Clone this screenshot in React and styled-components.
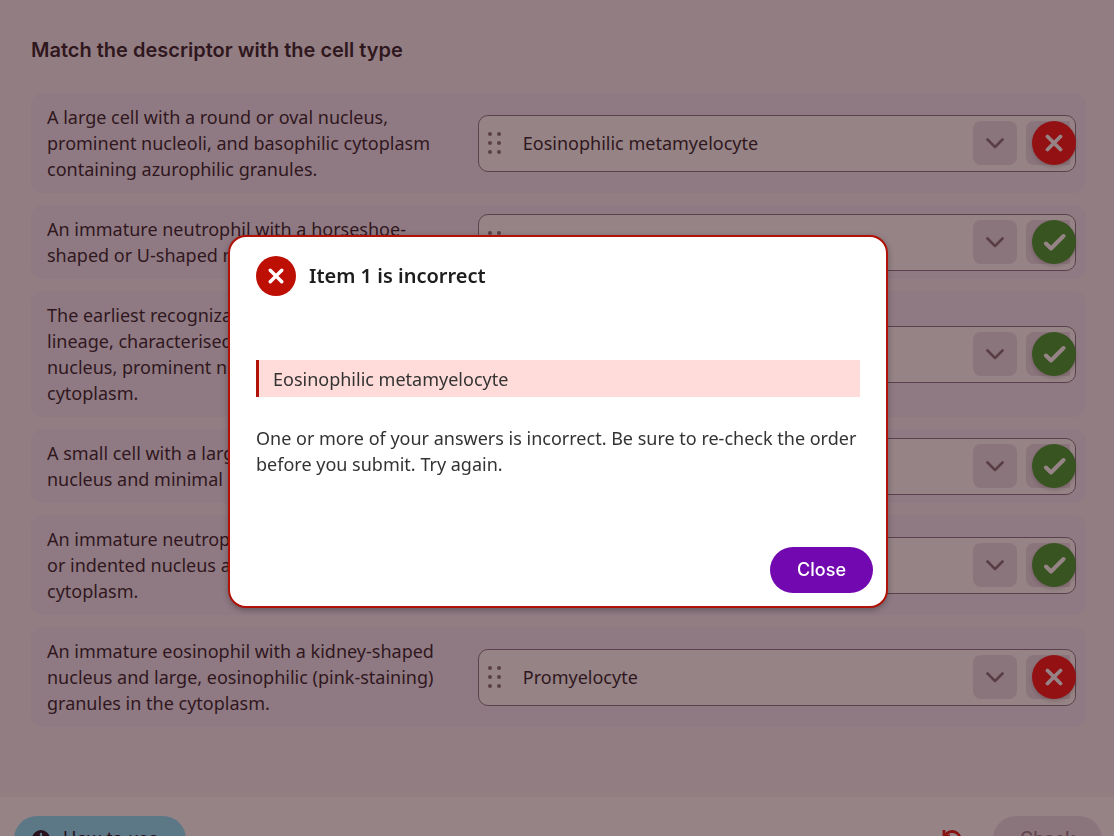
import React, { useState } from 'react';
import styled, { createGlobalStyle } from 'styled-components';

const GlobalStyle = createGlobalStyle`
  * {
    box-sizing: border-box;
  }

  body {
    margin: 0;
    background: #f9f2f8;
    color: #1c1018;
    font-family: 'Noto Sans', sans-serif;
    font-size: 18px;
    line-height: 26px;
  }

  button, select {
    font: inherit;
    color: inherit;
  }
`;

const Page = styled.div`
  height: 100vh;
  overflow: hidden;
  display: flex;
  flex-direction: column;
`;

const Activity = styled.main`
  flex: none;
  padding: 35px 28px 70px 31px;
`;

const Title = styled.h1`
  margin: 0 0 28px;
  font-family: Inter, sans-serif;
  font-size: 20px;
  font-weight: 600;
  line-height: 30px;
`;

const List = styled.ul`
  margin: 0;
  padding: 0;
  list-style: none;
  display: flex;
  flex-direction: column;
  gap: 12px;
`;

const Row = styled.li`
  display: grid;
  grid-template-columns: 2fr 3fr;
  gap: 32px;
  align-items: center;
  padding: 11px 10px 11px 16px;
  border-radius: 12px;
  background: #f2ebf8;
`;

const Descriptor = styled.label`
  display: block;
`;

const Field = styled.div`
  display: flex;
  align-items: center;
  height: 57px;
  margin: -4px 0;
  padding-left: 8px;
  border: 1px solid #7c6f80;
  border-radius: 10px;
  background: #fff;
`;

const Handle = styled.svg`
  flex: none;
  width: 15px;
  height: 22px;
  margin-right: 21px;
  fill: #7a6a70;
`;

const SelectBox = styled.div`
  flex: 1;
  display: grid;
  align-items: center;
  min-width: 0;

  > * {
    grid-area: 1 / 1;
  }
`;

const Select = styled.select`
  width: 100%;
  height: 44px;
  padding: 0;
  border: 0;
  background: transparent;
  appearance: none;
`;

const Chevron = styled.span`
  justify-self: end;
  display: grid;
  place-items: center;
  width: 44px;
  height: 44px;
  border-radius: 8px;
  background: #e9dfe8;
  pointer-events: none;
`;

const Slot = styled.div`
  display: flex;
  justify-content: flex-end;
  width: 50px;
  margin: 0 -1px 0 9px;
  border-radius: 8px;
  background: linear-gradient(to right, #e9dfe8 44px, transparent 44px);
`;

const Mark = styled.span`
  flex: none;
  display: grid;
  place-items: center;
  width: ${props => props.$size || 44}px;
  height: ${props => props.$size || 44}px;
  border-radius: 50%;
  background: ${props => props.$color};
  box-shadow: ${props => props.$flat ? 'none' : '0 2px 4px rgba(0, 0, 0, 0.2)'};
`;

const Footer = styled.footer`
  display: flex;
  align-items: flex-start;
  justify-content: space-between;
  flex: none;
  padding: 19px 12px 18px 14px;
  background: #fff;
`;

const Actions = styled.div`
  display: flex;
  align-items: center;
  gap: 31px;
`;

const Pill = styled.button`
  display: flex;
  align-items: center;
  justify-content: center;
  gap: 12px;
  height: 46px;
  padding: 0 27px;
  border: 0;
  border-radius: 23px;
  background: ${props => props.$color};
  color: ${props => props.$text};
  font-family: Inter, sans-serif;
  font-weight: 500;
  cursor: pointer;
`;

const HelpPill = styled(Pill)`
  padding: 0 27px 0 17px;
  font-weight: 400;
`;

const IconButton = styled.button`
  display: flex;
  padding: 0;
  border: 0;
  background: none;
`;

const Overlay = styled.div`
  position: fixed;
  inset: 0;
  display: grid;
  place-items: center;
  padding: 7px 2px 0 4px;
  background: rgba(62, 30, 35, 0.55);
`;

const Dialog = styled.section`
  display: flex;
  flex-direction: column;
  width: 660px;
  max-width: 100%;
  min-height: 373px;
  padding: 19px 13px 13px 26px;
  border: 2px solid #b01208;
  border-radius: 18px;
  background: #fff;
  color: #333;
  box-shadow: 0 2px 6px rgba(0, 0, 0, 0.3);
`;

const DialogHeader = styled.header`
  display: flex;
  align-items: center;
  gap: 13px;
  margin-bottom: 64px;
`;

const DialogTitle = styled.h2`
  margin: 0;
  color: #1d1d1d;
  font-size: 20px;
  font-weight: 600;
`;

const Answer = styled.p`
  margin: 0 13px 28px 0;
  padding: 6px 14px 5px;
  border-left: 3px solid #b01208;
  background: #ffdcd9;
`;

const Message = styled.p`
  margin: 0 13px 0 0;
`;

const DialogFooter = styled.footer`
  display: flex;
  justify-content: flex-end;
  margin-top: auto;
`;

const OPTIONS = [
  'Eosinophilic metamyelocyte',
  'Neutrophilic band',
  'Myeloblast',
  'Lymphocyte',
  'Neutrophilic metamyelocyte',
  'Promyelocyte',
];

const ITEMS = [
  {
    text: 'A large cell with a round or oval nucleus, prominent nucleoli, and basophilic cytoplasm containing azurophilic granules.',
    answer: 'Eosinophilic metamyelocyte',
    correct: false,
  },
  {
    text: 'An immature neutrophil with a horseshoe-shaped or U-shaped nucleus.',
    answer: 'Neutrophilic band',
    correct: true,
  },
  {
    text: 'The earliest recognizable cell of myeloid lineage, characterised by a large round nucleus, prominent nucleoli and basophilic cytoplasm.',
    answer: 'Myeloblast',
    correct: true,
  },
  {
    text: 'A small cell with a large, densely stained nucleus and minimal cytoplasm.',
    answer: 'Lymphocyte',
    correct: true,
  },
  {
    text: 'An immature neutrophil with a kidney-shaped or indented nucleus and pink granules in the cytoplasm.',
    answer: 'Neutrophilic metamyelocyte',
    correct: true,
  },
  {
    text: 'An immature eosinophil with a kidney-shaped nucleus and large, eosinophilic (pink-staining) granules in the cytoplasm.',
    answer: 'Promyelocyte',
    correct: false,
  },
];

const Cross = ({ size = 18 }) => (
  <svg width={size} height={size} viewBox="0 0 18 18" fill="none" stroke="#fff" strokeWidth="3.8" strokeLinecap="round">
    <path d="M2.5 2.5 L15.5 15.5 M15.5 2.5 L2.5 15.5" />
  </svg>
);

const Tick = () => (
  <svg width="24" height="18" viewBox="0 0 24 18" fill="none" stroke="#fff" strokeWidth="4" strokeLinecap="round" strokeLinejoin="round">
    <path d="M4 10.5 L9 15.5 L21.5 3" />
  </svg>
);

const DragHandle = () => (
  <Handle viewBox="0 0 15 22" aria-hidden="true">
    {[3, 12].map(x => [2, 11, 20].map(y => (
      <circle key={`${x}-${y}`} cx={x} cy={y} r="2" />
    )))}
  </Handle>
);

const MatchRow = ({ item, index }) => {
  const [value, setValue] = useState(item.answer);
  const id = `item-${index}`;

  return (
    <Row>
      <Descriptor htmlFor={id}>{item.text}</Descriptor>
      <Field>
        <DragHandle />
        <SelectBox>
          <Select id={id} value={value} onChange={e => setValue(e.target.value)}>
            {OPTIONS.map(option => <option key={option}>{option}</option>)}
          </Select>
          <Chevron>
            <svg width="18" height="11" viewBox="0 0 18 11" fill="none" stroke="#7a6870" strokeWidth="2.6" strokeLinecap="round" strokeLinejoin="round">
              <path d="M1.5 1.5 L9 9 L16.5 1.5" />
            </svg>
          </Chevron>
        </SelectBox>
        <Slot>
          <Mark $color={item.correct ? '#31971f' : '#fb0400'}>
            {item.correct ? <Tick /> : <Cross />}
          </Mark>
        </Slot>
      </Field>
    </Row>
  );
};

const App = () => {
  const [open, setOpen] = useState(true);

  return (
    <>
      <GlobalStyle />
      <Page>
        <Activity>
          <Title>Match the descriptor with the cell type</Title>
          <List>
            {ITEMS.map((item, i) => <MatchRow key={item.answer} item={item} index={i + 1} />)}
          </List>
        </Activity>
        <Footer>
          <HelpPill $color="#81e7ff" $text="#100018">
            <svg width="20" height="20" viewBox="0 0 20 20" aria-hidden="true">
              <circle cx="10" cy="10" r="9" fill="#100018" />
              <path d="M10 5 V6 M10 9 V15" stroke="#81e7ff" strokeWidth="2.4" strokeLinecap="round" />
            </svg>
            How to use
          </HelpPill>
          <Actions>
            <IconButton aria-label="Reset">
              <svg width="20" height="20" viewBox="0 0 20 20" fill="none" stroke="#e20800" strokeWidth="2.8">
                <path d="M2 1 V7 H8" />
                <path d="M3 7 A8 8 0 1 1 3 14" />
              </svg>
            </IconButton>
            <Pill $color="#e9dfe8" $text="#8b7b88" disabled>Check</Pill>
          </Actions>
        </Footer>
      </Page>
      {open && (
        <Overlay>
          <Dialog role="dialog" aria-modal="true" aria-labelledby="feedback-title">
            <DialogHeader>
              <Mark $color="#be0f05" $size={40} $flat>
                <Cross size={16} />
              </Mark>
              <DialogTitle id="feedback-title">Item 1 is incorrect</DialogTitle>
            </DialogHeader>
            <Answer>Eosinophilic metamyelocyte</Answer>
            <Message>
              One or more of your answers is incorrect. Be sure to re-check the order before you submit. Try again.
            </Message>
            <DialogFooter>
              <Pill $color="#7209b0" $text="#fff" onClick={() => setOpen(false)}>Close</Pill>
            </DialogFooter>
          </Dialog>
        </Overlay>
      )}
    </>
  );
};

export default App;
